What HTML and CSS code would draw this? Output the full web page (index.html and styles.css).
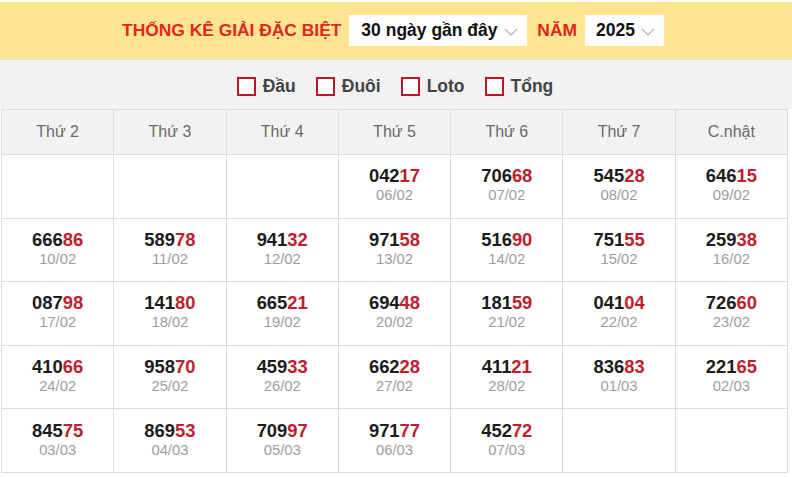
FILE: index.html
```html
<!DOCTYPE html>
<html lang="vi">
<head>
<meta charset="utf-8">
<title>Thống kê giải đặc biệt</title>
<link rel="stylesheet" href="styles.css">
</head>
<body>
<div class="widget">
  <div class="filter-bar">
    <span class="title">THỐNG KÊ GIẢI ĐẶC BIỆT</span>
    <div class="select select-range">
      <span>30 ngày gần đây</span>
      <svg class="chev" width="14" height="8" viewBox="0 0 14 8"><polyline points="1,1 7,7 13,1" fill="none" stroke="#b8b8b8" stroke-width="1.3"/></svg>
    </div>
    <span class="title title-year">NĂM</span>
    <div class="select select-year">
      <span>2025</span>
      <svg class="chev" width="14" height="8" viewBox="0 0 14 8"><polyline points="1,1 7,7 13,1" fill="none" stroke="#b8b8b8" stroke-width="1.3"/></svg>
    </div>
  </div>
  <div class="check-bar">
    <label class="check"><span class="box"></span>Đầu</label>
    <label class="check"><span class="box"></span>Đuôi</label>
    <label class="check"><span class="box"></span>Loto</label>
    <label class="check"><span class="box"></span>Tổng</label>
  </div>
  <table class="grid">
    <thead>
      <tr><th>Thứ 2</th><th>Thứ 3</th><th>Thứ 4</th><th>Thứ 5</th><th>Thứ 6</th><th>Thứ 7</th><th>C.nhật</th></tr>
    </thead>
    <tbody>
      <tr>
        <td></td><td></td><td></td>
        <td><div class="num">042<b>17</b></div><div class="date">06/02</div></td>
        <td><div class="num">706<b>68</b></div><div class="date">07/02</div></td>
        <td><div class="num">545<b>28</b></div><div class="date">08/02</div></td>
        <td><div class="num">646<b>15</b></div><div class="date">09/02</div></td>
      </tr>
      <tr>
        <td><div class="num">666<b>86</b></div><div class="date">10/02</div></td>
        <td><div class="num">589<b>78</b></div><div class="date">11/02</div></td>
        <td><div class="num">941<b>32</b></div><div class="date">12/02</div></td>
        <td><div class="num">971<b>58</b></div><div class="date">13/02</div></td>
        <td><div class="num">516<b>90</b></div><div class="date">14/02</div></td>
        <td><div class="num">751<b>55</b></div><div class="date">15/02</div></td>
        <td><div class="num">259<b>38</b></div><div class="date">16/02</div></td>
      </tr>
      <tr>
        <td><div class="num">087<b>98</b></div><div class="date">17/02</div></td>
        <td><div class="num">141<b>80</b></div><div class="date">18/02</div></td>
        <td><div class="num">665<b>21</b></div><div class="date">19/02</div></td>
        <td><div class="num">694<b>48</b></div><div class="date">20/02</div></td>
        <td><div class="num">181<b>59</b></div><div class="date">21/02</div></td>
        <td><div class="num">041<b>04</b></div><div class="date">22/02</div></td>
        <td><div class="num">726<b>60</b></div><div class="date">23/02</div></td>
      </tr>
      <tr>
        <td><div class="num">410<b>66</b></div><div class="date">24/02</div></td>
        <td><div class="num">958<b>70</b></div><div class="date">25/02</div></td>
        <td><div class="num">459<b>33</b></div><div class="date">26/02</div></td>
        <td><div class="num">662<b>28</b></div><div class="date">27/02</div></td>
        <td><div class="num">411<b>21</b></div><div class="date">28/02</div></td>
        <td><div class="num">836<b>83</b></div><div class="date">01/03</div></td>
        <td><div class="num">221<b>65</b></div><div class="date">02/03</div></td>
      </tr>
      <tr>
        <td><div class="num">845<b>75</b></div><div class="date">03/03</div></td>
        <td><div class="num">869<b>53</b></div><div class="date">04/03</div></td>
        <td><div class="num">709<b>97</b></div><div class="date">05/03</div></td>
        <td><div class="num">971<b>77</b></div><div class="date">06/03</div></td>
        <td><div class="num">452<b>72</b></div><div class="date">07/03</div></td>
        <td></td><td></td>
      </tr>
    </tbody>
  </table>
</div>
</body>
</html>
```
FILE: styles.css
```css
* { box-sizing: border-box; }
html, body { margin: 0; padding: 0; background: #fff; }
body {
  padding-top: 2px;
  font-family: "Liberation Sans", Arial, sans-serif;
  color: #222;
}
.widget { width: 792px; }
.filter-bar {
  height: 57px;
  background: #ffe592;
  display: flex;
  align-items: center;
  justify-content: center;
  padding-right: 6px;
}
.title {
  color: #e2261d;
  font-weight: bold;
  font-size: 17.4px;
  margin: 0 4px;
}
.title-year { margin: 0 4px 0 6px; }
.select {
  background: #fff;
  height: 31px;
  display: flex;
  align-items: center;
  justify-content: space-between;
  padding: 0 9px 0 12px;
  font-weight: bold;
  font-size: 17.5px;
  color: #111;
  margin: 0 4px;
}
.select-range { width: 178px; }
.select-year { width: 79px; padding-left: 11px; }
.chev { margin-top: 2px; }
.check-bar {
  height: 50px;
  background: #f2f2f2;
  border-top: 1px solid #e6e0cc;
  display: flex;
  align-items: center;
  justify-content: center;
  gap: 20px;
  padding-top: 3px;
  padding-right: 2px;
}
.check {
  display: flex;
  align-items: center;
  gap: 7px;
  font-weight: bold;
  font-size: 17.5px;
  color: #444;
}
.box {
  width: 19px;
  height: 19px;
  border: 2px solid #b8162a;
  background: #fff;
}
.grid {
  width: 787px;
  margin-left: 1px;
  border-collapse: collapse;
  table-layout: fixed;
}
.grid th, .grid td {
  border: 1px solid #dcdcdc;
  text-align: center;
}
.grid th {
  height: 45px;
  background: #f2f2f2;
  font-weight: normal;
  font-size: 16px;
  color: #6a6a6a;
  padding: 0;
}
.grid td {
  height: 63.6px;
  padding: 0 0 2px;
  vertical-align: middle;
}
.num {
  font-weight: bold;
  font-size: 18.4px;
  color: #1c1c1c;
  line-height: 21px;
}
.num b { color: #be1e2d; }
.date {
  font-size: 14.8px;
  color: #9d9d9d;
  line-height: 19px;
}
```
